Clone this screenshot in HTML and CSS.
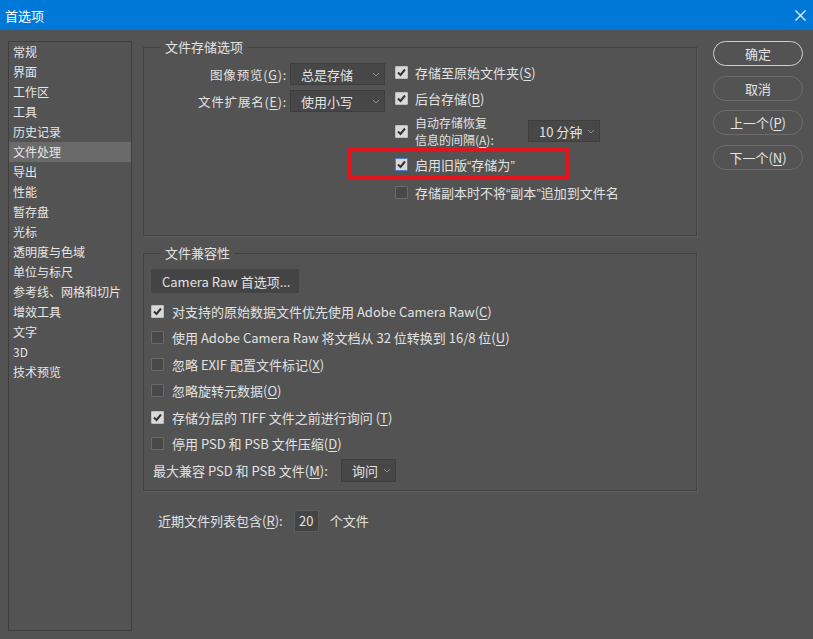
FILE: index.html
```html
<!DOCTYPE html>
<html lang="zh-CN">
<head>
    <meta charset="UTF-8">
    <title>首选项</title>
    <link rel="stylesheet" href="styles.css">
</head>
<body>
    <div class="titlebar">
        <span class="title">首选项</span>
        <svg class="close" width="11" height="11" viewBox="0 0 11 11">
            <path d="M0.5 0.5 L10.5 10.5 M10.5 0.5 L0.5 10.5" stroke="#fff" stroke-width="1.1" fill="none"/>
        </svg>
    </div>

    <div class="main">
        <ul class="nav">
            <li>常规</li>
            <li>界面</li>
            <li>工作区</li>
            <li>工具</li>
            <li>历史记录</li>
            <li class="active">文件处理</li>
            <li>导出</li>
            <li>性能</li>
            <li>暂存盘</li>
            <li>光标</li>
            <li>透明度与色域</li>
            <li>单位与标尺</li>
            <li>参考线、网格和切片</li>
            <li>增效工具</li>
            <li>文字</li>
            <li>3D</li>
            <li>技术预览</li>
        </ul>

        <div class="content">
            <fieldset class="group save-group">
                <legend>文件存储选项</legend>
                <div class="save-cols">
                    <div class="fields">
                        <div class="field">
                            <span class="field-label">图像预览(<u>G</u>):</span>
                            <div class="select">总是存储<svg class="chev" width="8" height="5" viewBox="0 0 8 5"><polyline points="1,1 4,4 7,1"/></svg></div>
                        </div>
                        <div class="field">
                            <span class="field-label">文件扩展名(<u>E</u>):</span>
                            <div class="select">使用小写<svg class="chev" width="8" height="5" viewBox="0 0 8 5"><polyline points="1,1 4,4 7,1"/></svg></div>
                        </div>
                    </div>
                    <div class="checks">
                        <div class="check-row r1">
                            <span class="cb on"><svg width="11" height="11" viewBox="0 0 11 11"><polyline points="2,5.5 4.5,8 9,2.5"/></svg></span>
                            <span>存储至原始文件夹(<u>S</u>)</span>
                        </div>
                        <div class="check-row r2">
                            <span class="cb on"><svg width="11" height="11" viewBox="0 0 11 11"><polyline points="2,5.5 4.5,8 9,2.5"/></svg></span>
                            <span>后台存储(<u>B</u>)</span>
                        </div>
                        <div class="check-row r3">
                            <span class="cb on"><svg width="11" height="11" viewBox="0 0 11 11"><polyline points="2,5.5 4.5,8 9,2.5"/></svg></span>
                            <span class="two-line">自动存储恢复<br>信息的间隔(<u>A</u>):</span>
                            <div class="select small">10 分钟<svg class="chev" width="8" height="5" viewBox="0 0 8 5"><polyline points="1,1 4,4 7,1"/></svg></div>
                        </div>
                        <div class="check-row r4">
                            <span class="highlight"></span>
                            <span class="cb on focus"><svg width="11" height="11" viewBox="0 0 11 11"><polyline points="2,5.5 4.5,8 9,2.5"/></svg></span>
                            <span>启用旧版<span class="q">“</span>存储为<span class="q">”</span></span>
                        </div>
                        <div class="check-row r5">
                            <span class="cb"></span>
                            <span>存储副本时不将<span class="q">“</span>副本<span class="q">”</span>追加到文件名</span>
                        </div>
                    </div>
                </div>
            </fieldset>

            <fieldset class="group compat-group">
                <legend>文件兼容性</legend>
                <div class="btn-flat">Camera Raw 首选项...</div>
                <div class="compat-rows">
                    <div class="check-row">
                        <span class="cb on"><svg width="11" height="11" viewBox="0 0 11 11"><polyline points="2,5.5 4.5,8 9,2.5"/></svg></span>
                        <span>对支持的原始数据文件优先使用 Adobe Camera Raw(<u>C</u>)</span>
                    </div>
                    <div class="check-row">
                        <span class="cb"></span>
                        <span>使用 Adobe Camera Raw 将文档从 32 位转换到 16/8 位(<u>U</u>)</span>
                    </div>
                    <div class="check-row">
                        <span class="cb"></span>
                        <span>忽略 EXIF 配置文件标记(<u>X</u>)</span>
                    </div>
                    <div class="check-row">
                        <span class="cb"></span>
                        <span>忽略旋转元数据(<u>O</u>)</span>
                    </div>
                    <div class="check-row">
                        <span class="cb on"><svg width="11" height="11" viewBox="0 0 11 11"><polyline points="2,5.5 4.5,8 9,2.5"/></svg></span>
                        <span>存储分层的 TIFF 文件之前进行询问 (<u>T</u>)</span>
                    </div>
                    <div class="check-row">
                        <span class="cb"></span>
                        <span>停用 PSD 和 PSB 文件压缩(<u>D</u>)</span>
                    </div>
                    <div class="check-row compat-max">
                        <span class="max-label">最大兼容 PSD 和 PSB 文件(<u>M</u>):</span>
                        <div class="select tiny">询问<svg class="chev" width="8" height="5" viewBox="0 0 8 5"><polyline points="1,1 4,4 7,1"/></svg></div>
                    </div>
                </div>
            </fieldset>

            <div class="recent">
                <span>近期文件列表包含(<u>R</u>):</span>
                <span class="num-input">20</span>
                <span>个文件</span>
            </div>
        </div>

        <div class="buttons">
            <div class="pill default">确定</div>
            <div class="pill">取消</div>
            <div class="pill">上一个(<u>P</u>)</div>
            <div class="pill">下一个(<u>N</u>)</div>
        </div>
    </div>
</body>
</html>
```

FILE: styles.css
```css
body {
    margin: 0;
    width: 813px;
    height: 639px;
    overflow: hidden;
    background: #535353;
    color: #e2e2e2;
    font-family: "Noto Sans CJK SC", "Noto Sans", sans-serif;
    font-size: 13px;
}

u {
    text-decoration: underline;
    text-underline-offset: 2px;
}

.titlebar {
    height: 30px;
    background: #0078d7;
    color: #fff;
    display: flex;
    align-items: center;
    justify-content: space-between;
    padding: 0 7px 0 5px;
    font-size: 13px;
}

.main {
    display: flex;
    align-items: flex-start;
    padding: 11px 0 0 8px;
}

/* left category list */
.nav {
    list-style: none;
    margin: 0;
    padding: 0;
    width: 124px;
    height: 590px;
    box-sizing: border-box;
    border: 1px solid #3f3f3f;
    background: #535353;
}

.nav li {
    height: 20px;
    line-height: 20px;
    padding-left: 4px;
    font-size: 12px;
    color: #e6e6e6;
    white-space: nowrap;
}

.nav li.active {
    background: #6a6a6a;
}

.content {
    width: 554px;
    margin-left: 11px;
}

.group {
    margin: 0;
    border: 1px solid #424242;
    box-shadow: 1px 1px 0 #5d5d5d;
    min-width: 0;
}

.group legend {
    padding: 0 4px;
    font-size: 13px;
    line-height: 12px;
    color: #e2e2e2;
}

.save-group {
    padding: 7px 0 29px 0;
}

.save-group legend {
    margin-left: 17px;
}

.save-cols {
    display: flex;
}

.fields {
    width: 241px;
    margin-top: 2px;
    display: flex;
    flex-direction: column;
    gap: 3px;
}

.field {
    height: 24px;
    display: flex;
    align-items: center;
}

.field-label {
    flex: 1;
    text-align: right;
    padding-right: 3px;
    font-size: 12.5px;
    letter-spacing: 0.8px;
}

.select {
    width: 95px;
    height: 22px;
    box-sizing: border-box;
    background: #474747;
    border: 1px solid #3e3e3e;
    display: flex;
    align-items: center;
    justify-content: space-between;
    padding: 0 4px 0 10px;
    font-size: 13px;
}

.select.small {
    width: 72px;
}

.select.tiny {
    width: 55px;
    height: 23px;
}

.chev polyline {
    fill: none;
    stroke: #8c8c8c;
    stroke-width: 1;
}

.checks {
    margin-left: 10px;
    display: flex;
    flex-direction: column;
}

.check-row {
    display: flex;
    align-items: center;
    gap: 7px;
    position: relative;
    white-space: nowrap;
}

.r1 { height: 24px; }
.r2 { height: 28px; }
.r3 { height: 38px; }
.r4 { height: 28px; }
.r5 { height: 28px; }

.two-line {
    width: 106px;
    font-size: 12px;
    line-height: 17.5px;
}

.cb {
    width: 13px;
    height: 13px;
    box-sizing: border-box;
    flex-shrink: 0;
    background: #484848;
    border: 1px solid #6a6a6a;
    border-radius: 1px;
    display: flex;
    align-items: center;
    justify-content: center;
}

.cb.on {
    background: #d9d9d9;
    border-color: #bdbdbd;
}

.cb.on polyline {
    fill: none;
    stroke: #333;
    stroke-width: 2;
}

.cb.focus {
    border-color: #4a7fd0;
}

.q {
    font-family: "Liberation Sans", sans-serif;
}

.highlight {
    position: absolute;
    left: -48px;
    top: -2px;
    width: 223px;
    height: 32px;
    box-sizing: border-box;
    border: 4px solid #e5141c;
}

.compat-group {
    margin-top: 11px;
    padding: 10px 0 6px 7px;
}

.compat-group legend {
    margin-left: 10px;
}

.btn-flat {
    display: inline-flex;
    align-items: center;
    height: 24px;
    width: 148px;
    box-sizing: border-box;
    padding-left: 11px;
    background: #444;
    border-radius: 2px;
    font-size: 13px;
}

.compat-rows {
    margin-top: 5px;
    display: flex;
    flex-direction: column;
}

.compat-rows .check-row {
    height: 26.5px;
    gap: 8px;
}

.compat-max {
    padding-left: 2px;
}

.max-label {
    width: 180px;
}

.recent {
    display: flex;
    align-items: center;
    height: 22px;
    margin-top: 19px;
    padding-left: 15px;
}

.num-input {
    width: 25px;
    height: 22px;
    box-sizing: border-box;
    margin: 0 11px 0 11px;
    background: #444;
    border: 1px solid #5c5c5c;
    display: flex;
    align-items: center;
    justify-content: center;
}

/* right-hand dialog buttons */
.buttons {
    margin-left: 16px;
    width: 90px;
    display: flex;
    flex-direction: column;
    gap: 9.5px;
}

.pill {
    height: 25px;
    box-sizing: border-box;
    border: 1.5px solid #6c6c6c;
    border-radius: 13px;
    display: flex;
    align-items: center;
    justify-content: center;
    font-size: 13px;
    color: #e4e4e4;
}

.pill.default {
    border-color: #cfcfcf;
}
```
